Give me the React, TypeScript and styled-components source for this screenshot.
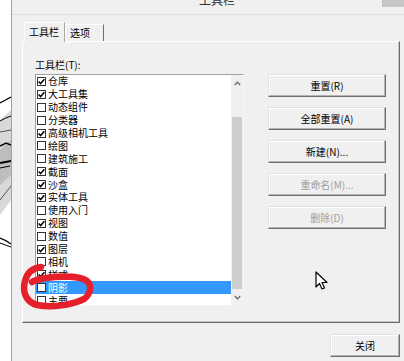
import React from "react";
import styled, { createGlobalStyle } from "styled-components";

const GlobalStyle = createGlobalStyle`
  html, body { margin: 0; padding: 0; background: #ffffff; }
  body { font-family: "Noto Sans CJK SC", "Noto Sans", "Liberation Sans", sans-serif; }
  * { box-sizing: border-box; }
`;

const Page = styled.div`
  position: relative;
  width: 404px;
  height: 361px;
  overflow: hidden;
  display: flex;
  background: #ffffff;
`;

const Sketch = styled.div`
  width: 11px;
  flex: none;
  background: #ffffff;
`;

const Dialog = styled.div`
  flex: 1;
  display: flex;
  flex-direction: column;
  background: #f0f0f0;
  border-left: 1px solid #a0a0a0;
`;

const TitleBar = styled.div`
  height: 15px;
  flex: none;
  display: flex;
  justify-content: center;
  align-items: flex-end;
  position: relative;
  border-bottom: 1px solid #dddddd;
  background: #f0f0f0;
`;

const TitleText = styled.div`
  font-size: 12px;
  line-height: 14px;
  color: #333;
  margin-bottom: 7px;
  margin-left: 18px;
`;

const CloseX = styled.div`
  position: absolute;
  right: 0;
  top: 0;
  width: 22px;
  height: 7px;
  background: #c6c6c6;
`;

const Body = styled.div`
  flex: 1;
  display: flex;
  flex-direction: column;
  padding: 6px 4px 0 10px;
`;

const TabStrip = styled.div`
  display: flex;
  align-items: flex-end;
  height: 20px;
  padding-left: 2px;
  position: relative;
  z-index: 1;
`;

const Tab = styled.div<{ $active?: boolean }>`
  height: ${(p) => (p.$active ? "20px" : "17px")};
  padding: ${(p) => (p.$active ? "3px 5px 0 4px" : "2px 13px 0 4px")};
  font-size: 10px;
  line-height: 12px;
  color: #000;
  background: #f0f0f0;
  border-top: 1px solid #ffffff;
  border-left: 1px solid #ffffff;
  border-right: 1px solid ${(p) => (p.$active ? "#a8a8a8" : "#6e6e6e")};
  margin-bottom: ${(p) => (p.$active ? "-1px" : "0")};
`;

const TabPanel = styled.div`
  height: 282px;
  border-top: 1px solid #ffffff;
  border-left: 1px solid #ffffff;
  border-right: 1px solid #696969;
  border-bottom: 1px solid #696969;
  box-shadow: inset -1px -1px 0 #c8c8c8;
  display: flex;
  padding: 15px 0 0 12px;
  gap: 24px;
  background: #f0f0f0;
`;

const ListColumn = styled.div`
  display: flex;
  flex-direction: column;
`;

const FieldLabel = styled.div`
  font-size: 10px;
  line-height: 16px;
  height: 17px;
  color: #000;
`;

const ListBox = styled.div`
  width: 209px;
  height: 232px;
  background: #ffffff;
  border-top: 1px solid #a0a0a0;
  border-left: 1px solid #a0a0a0;
  border-right: 1px solid #f4f4f4;
  border-bottom: 1px solid #f4f4f4;
  display: flex;
  overflow: hidden;
`;

const Rows = styled.div`
  flex: 1;
  overflow: hidden;
`;

const Row = styled.div<{ $selected?: boolean }>`
  height: 12.9px;
  display: flex;
  align-items: center;
  gap: 2px;
  padding-left: 1px;
  font-size: 10px;
  line-height: 12px;
  color: ${(p) => (p.$selected ? "#ffffff" : "#000000")};
  background: ${(p) => (p.$selected ? "#3399ff" : "transparent")};
  white-space: nowrap;
`;

const Box = styled.span`
  width: 9px;
  height: 9px;
  flex: none;
  border: 1px solid #333333;
  background: #ffffff;
  display: flex;
  align-items: center;
  justify-content: center;
`;

const ScrollBar = styled.div`
  width: 12px;
  flex: none;
  background: #f0f0f0;
  display: flex;
  flex-direction: column;
  align-items: center;
`;

const Arrow = styled.div`
  height: 16px;
  width: 100%;
  display: flex;
  align-items: center;
  justify-content: center;
  flex: none;
`;

const Track = styled.div`
  flex: 1;
  width: 100%;
  padding: 26px 1px 0 1px;
  display: flex;
`;

const Thumb = styled.div`
  flex: 1;
  background: #cdcdcd;
`;

const ButtonColumn = styled.div`
  display: flex;
  flex-direction: column;
  gap: 10px;
  padding-top: 17px;
`;

const Btn = styled.div<{ $disabled?: boolean; $w?: number }>`
  width: ${(p) => p.$w ?? 118}px;
  height: 23px;
  display: flex;
  align-items: center;
  justify-content: center;
  font-size: 10px;
  color: ${(p) => (p.$disabled ? "#a0a0a0" : "#000000")};
  background: #f0f0f0;
  border-top: 1px solid #e3e3e3;
  border-left: 1px solid #e3e3e3;
  border-right: 1px solid #6f6f6f;
  border-bottom: 1px solid #6f6f6f;
  box-shadow: inset -1px -1px 0 #b4b4b4, inset 1px 1px 0 #ffffff;
`;

const Footer = styled.div`
  display: flex;
  justify-content: flex-end;
  padding-top: 11px;
`;

const Overlay = styled.svg`
  position: absolute;
  left: 0;
  top: 0;
  pointer-events: none;
`;

const Check = () => (
  <svg width="7" height="7" viewBox="0 0 7 7">
    <path d="M0.6 3.4 L2.6 5.6 L6.4 1.2" fill="none" stroke="#000" strokeWidth="1.5" />
  </svg>
);

const items: [string, boolean][] = [
  ["仓库", true],
  ["大工具集", true],
  ["动态组件", false],
  ["分类器", false],
  ["高级相机工具", true],
  ["绘图", false],
  ["建筑施工", false],
  ["截面", true],
  ["沙盒", true],
  ["实体工具", true],
  ["使用入门", false],
  ["视图", true],
  ["数值", false],
  ["图层", true],
  ["相机", false],
  ["样式", true],
  ["阴影", false],
  ["主要", false],
];

export default function App() {
  return (
    <>
      <GlobalStyle />
      <Page>
        <Sketch>
          <svg width="11" height="361" viewBox="0 0 11 361">
            <path d="M0 120 L11 110 L11 200 L0 215 Z" fill="#d8d8d8" />
            <path d="M0 150 L11 140 L11 175 L0 185 Z" fill="#bdbdbd" />
            <path d="M0 103 L11 97" stroke="#000" strokeWidth="1.2" fill="none" />
            <path d="M0 121 Q5 118 11 116" stroke="#000" strokeWidth="1" fill="none" />
            <path d="M0 132 L11 130" stroke="#333" strokeWidth="0.8" fill="none" />
            <path d="M0 146 L6 143 L11 145" stroke="#000" strokeWidth="1.4" fill="none" />
            <path d="M0 163 L11 161" stroke="#000" strokeWidth="1.8" fill="none" />
            <path d="M0 168 L10 166" stroke="#000" strokeWidth="1" fill="none" />
            <path d="M0 200 L11 186" stroke="#555" strokeWidth="1" fill="none" />
            <path d="M0 238 Q6 240 11 244" stroke="#000" strokeWidth="1.3" fill="none" />
            <path d="M0 243 L11 247" stroke="#000" strokeWidth="1" fill="none" />
          </svg>
        </Sketch>
        <Dialog>
          <TitleBar>
            <TitleText>工具栏</TitleText>
            <CloseX />
          </TitleBar>
          <Body>
            <TabStrip>
              <Tab $active>工具栏</Tab>
              <Tab>选项</Tab>
            </TabStrip>
            <TabPanel>
              <ListColumn>
                <FieldLabel>工具栏(T):</FieldLabel>
                <ListBox>
                  <Rows>
                    {items.map(([name, checked]) => (
                      <Row key={name} $selected={name === "阴影"}>
                        <Box>{checked ? <Check /> : null}</Box>
                        <span>{name}</span>
                      </Row>
                    ))}
                  </Rows>
                  <ScrollBar>
                    <Arrow>
                      <svg width="7" height="5" viewBox="0 0 7 5">
                        <path d="M0.8 4 L3.5 1.2 L6.2 4" fill="none" stroke="#606060" strokeWidth="1.2" />
                      </svg>
                    </Arrow>
                    <Track>
                      <Thumb />
                    </Track>
                    <Arrow>
                      <svg width="7" height="5" viewBox="0 0 7 5">
                        <path d="M0.8 1 L3.5 3.8 L6.2 1" fill="none" stroke="#606060" strokeWidth="1.2" />
                      </svg>
                    </Arrow>
                  </ScrollBar>
                </ListBox>
              </ListColumn>
              <ButtonColumn>
                <Btn>重置(R)</Btn>
                <Btn>全部重置(A)</Btn>
                <Btn>新建(N)...</Btn>
                <Btn $disabled>重命名(M)...</Btn>
                <Btn $disabled>删除(D)</Btn>
              </ButtonColumn>
            </TabPanel>
            <Footer>
              <Btn $w={70}>关闭</Btn>
            </Footer>
          </Body>
        </Dialog>
        <Overlay width="404" height="361" viewBox="0 0 404 361">
          <path
            d="M41 267 C33 268 27 273 25 281 C22 292 26 302 37 305 C52 308 72 305 84 299 C91 294 92 285 87 281 C80 276 62 276 46 278 C40 279 35 280 32 282"
            fill="none"
            stroke="#e5202b"
            strokeWidth="6.5"
            strokeLinecap="round"
            strokeLinejoin="round"
          />
          <path
            d="M316 272 L316 287 L319.5 283.5 L322 289 L324.5 288 L322 282.5 L327 282.5 Z"
            fill="#ffffff"
            stroke="#000000"
            strokeWidth="1.2"
            strokeLinejoin="round"
          />
        </Overlay>
      </Page>
    </>
  );
}
